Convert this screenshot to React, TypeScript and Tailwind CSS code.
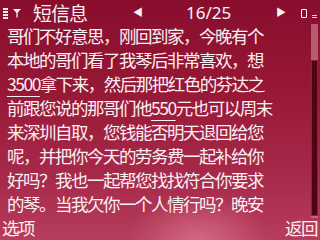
import React from "react";

const cjk = { fontFamily: '"Noto Sans CJK SC", "Noto Sans", sans-serif' };

const Line = ({ children }: { children: React.ReactNode }) => (
  <div className="h-[24px] leading-[24px] pl-[7px] whitespace-nowrap">{children}</div>
);

const App = () => {
  return (
    <div
      className="relative w-[320px] h-[240px] overflow-hidden text-[#fbeff2] bg-[image:radial-gradient(ellipse_70px_45px_at_62%_100%,rgba(235,140,165,0.55),transparent),linear-gradient(to_bottom,#880d2d_0%,#961734_35%,#a82a4b_75%,#b63d5c_100%)]"
      style={cjk}
    >
      {/* header */}
      <div className="h-[24px] flex items-center whitespace-nowrap">
        <div className="w-[33px] shrink-0 flex items-center">
          <div className="flex flex-col gap-[1px] ml-[3px] mt-[2px]">
            <div className="w-[5px] h-[2px] bg-white/90" />
            <div className="w-[5px] h-[2px] bg-white/90" />
            <div className="w-[5px] h-[2px] bg-white/90" />
            <div className="w-[5px] h-[2px] bg-white/90" />
          </div>
          <svg width="8" height="10" viewBox="0 0 8 10" className="ml-[5px] mt-[2px]">
            <path d="M0.5 1.5h7M4 1.5v8M1.5 1.5l2.5 3l2.5-3" stroke="white" strokeWidth="1.2" fill="none" />
          </svg>
        </div>
        <span className="w-[100px] shrink-0 text-[19px] leading-none tracking-[-1px]">短信息</span>
        <span className="w-[53px] shrink-0 text-[10px] leading-none">◀</span>
        <span
          className="w-[90px] shrink-0 text-[17px] leading-none"
          style={{ fontFamily: '"Noto Sans", sans-serif' }}
        >
          16/25
        </span>
        <span className="w-[25px] shrink-0 text-[10px] leading-none">▶</span>
        <div className="shrink-0 mt-[3px] w-[6px] h-[9px] border border-white rounded-[1px]" />
        <div className="shrink-0 ml-[5px] mt-[9px] flex flex-col gap-[1px]">
          <div className="w-[5px] h-[1px] bg-white/80" />
          <div className="w-[5px] h-[1px] bg-white/80" />
        </div>
      </div>

      {/* message body */}
      <div className="text-[17.5px] tracking-[-1.5px]">
        <Line>哥们不好意思，刚回到家，今晚有个</Line>
        <Line>本地的哥们看了我琴后非常喜欢，想</Line>
        <Line>
          <span className="underline underline-offset-[5px] decoration-1">3500</span>拿下来，然后那把红色的芬达之
        </Line>
        <Line>
          前跟您说的那哥们他
          <span className="underline underline-offset-[5px] decoration-1">550</span>元也可以周末
        </Line>
        <Line>来深圳自取，您钱能否明天退回给您</Line>
        <Line>呢，并把你今天的劳务费一起补给你</Line>
        <Line>好吗？我也一起帮您找找符合你要求</Line>
        <Line>的琴。当我欠你一个人情行吗？晚安</Line>
      </div>

      {/* soft keys */}
      <div className="h-[24px] flex items-center justify-between pl-[2px] pr-[3px] text-[17.5px] tracking-[-1.5px] leading-none">
        <span>选项</span>
        <span>返回</span>
      </div>

      {/* scrollbar */}
      <div className="absolute right-[2px] top-[24px] w-[7px] h-[194px] bg-[#c77b8c]/70 rounded-[1px]">
        <div className="mt-[36px] h-[156px] bg-[#4a0612] border border-[#7a2a3a]" />
      </div>
    </div>
  );
};

export default App;
